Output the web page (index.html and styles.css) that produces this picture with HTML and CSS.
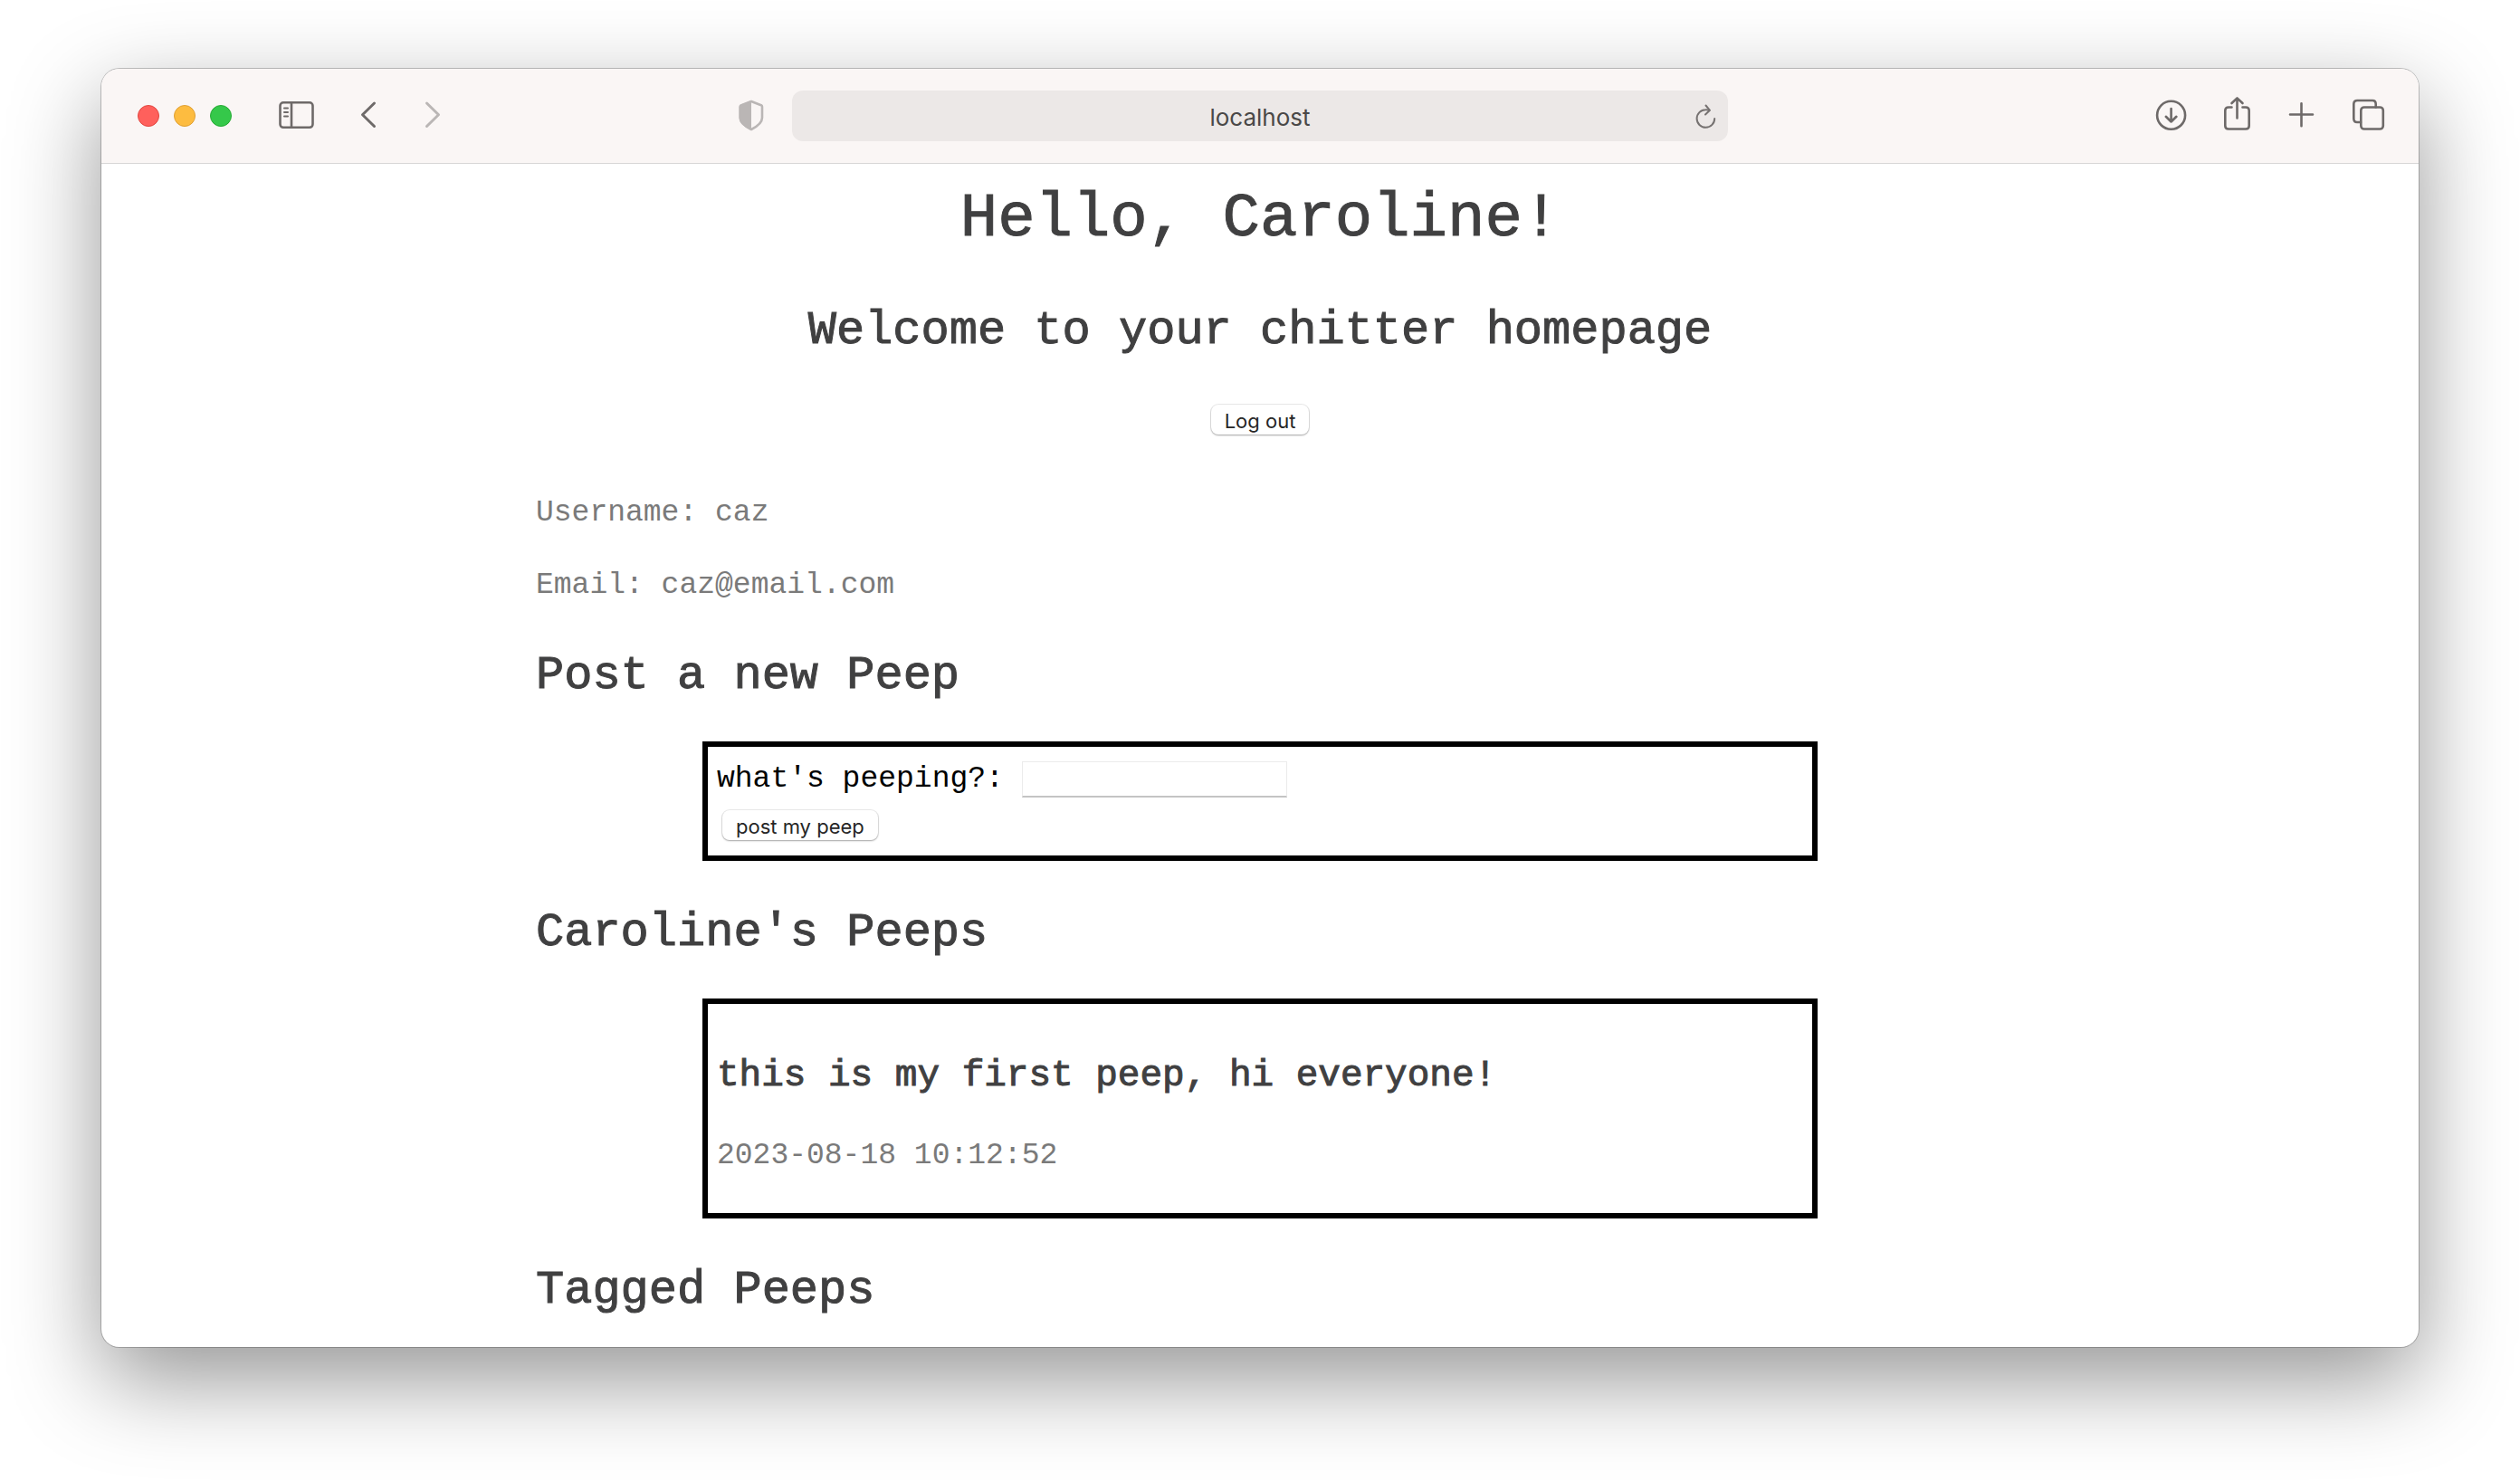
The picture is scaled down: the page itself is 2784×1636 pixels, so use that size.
FILE: index.html
```html
<!DOCTYPE html>
<html lang="en">
<head>
<meta charset="utf-8">
<meta name="viewport" content="width=device-width, initial-scale=1">
<title>Chitter</title>
<link rel="stylesheet" href="styles.css">
</head>
<body>
<div class="window">
  <header class="toolbar">
    <div class="toolbar-left">
      <div class="lights">
        <button class="light light-close" aria-label="Close"></button>
        <button class="light light-minimise" aria-label="Minimise"></button>
        <button class="light light-zoom" aria-label="Zoom"></button>
      </div>
      <button class="icon-button sidebar-button" aria-label="Show sidebar">
        <svg viewBox="0 0 40 40"><rect x="1.500" y="5.300" width="36" height="27.500" rx="3.500"/><path d="M14 5.300v27.500"/><path class="fine" d="M6 11.500h4M6 16h4M6 20.500h4"/></svg>
      </button>
      <button class="icon-button back-button" aria-label="Back">
        <svg viewBox="0 0 40 40"><path class="bold" d="M26.500 6L13.500 18.800L26.500 31.500"/></svg>
      </button>
      <button class="icon-button forward-button" aria-label="Forward" disabled>
        <svg viewBox="0 0 40 40"><path class="bold" d="M13.500 6L26.500 18.800L13.500 31.500"/></svg>
      </button>
      <button class="icon-button shield-button" aria-label="Privacy report">
        <svg viewBox="0 0 40 40"><path d="M20 4L31.500 8.500Q32 8.800 32 10V22C32 28 26 32 20 35C14 32 7.800 28 7.800 22V10Q7.800 8.800 8.500 8.500Z"/><path class="filled" d="M20 3L8 7.800Q6.500 8.500 6.500 10V22C6.500 29 14 33 20 36Z"/></svg>
      </button>
    </div>
    <div class="address">
      <input class="address-input" type="text" value="localhost" aria-label="Address">
      <button class="reload-button" aria-label="Reload">
        <svg viewBox="0 0 28 32"><path d="M17 9.700Q15 9 13.300 9.200A9.800 9.800 0 1 0 23.200 19"/><path d="M13.500 4.500L18 9.800L13 14.500"/></svg>
      </button>
    </div>
    <div class="toolbar-right">
      <button class="icon-button" aria-label="Downloads">
        <svg viewBox="0 0 40 40"><circle cx="21.600" cy="19.300" r="15.500"/><path d="M21.600 12v14.500M15.800 20.800L21.600 26.500L27.400 20.800"/></svg>
      </button>
      <button class="icon-button" aria-label="Share">
        <svg viewBox="0 0 40 40"><path d="M15.500 10.500H12Q8.300 10.500 8.300 14V31Q8.300 34.500 12 34.500H31Q34.700 34.500 34.700 31V14Q34.700 10.500 31 10.500H27.500"/><path d="M21.500 22.500V0.800M15.500 6L21.500 0.400L27.500 6"/></svg>
      </button>
      <button class="icon-button" aria-label="New tab">
        <svg viewBox="0 0 40 40"><path d="M19.500 6.300v25M7 18.500h25"/></svg>
      </button>
      <button class="icon-button" aria-label="Tab overview">
        <svg viewBox="0 0 40 40"><path d="M12 27H8Q4.300 27 4.300 23V7Q4.300 3 8.300 3H25Q28.700 3 28.700 7V10.500"/><rect x="12.300" y="10.500" width="24.500" height="24" rx="3.500"/></svg>
      </button>
    </div>
  </header>

  <main class="page">
    <div class="intro">
      <h1 class="greeting">Hello, Caroline!</h1>
      <h2 class="welcome">Welcome to your chitter homepage</h2>
      <button class="push-button logout">Log out</button>
    </div>
    <div class="content">
      <div class="details">
        <p class="detail">Username: caz</p>
        <p class="detail">Email: caz@email.com</p>
      </div>

      <h2 class="section-title">Post a new Peep</h2>
      <form class="card peep-form">
        <div class="field">
          <label for="peep">what's peeping?:</label>
          <input class="peep-input" id="peep" name="peep" type="text">
        </div>
        <button class="push-button post-button" type="button">post my peep</button>
      </form>

      <h2 class="section-title">Caroline's Peeps</h2>
      <article class="card peep">
        <h3 class="peep-text">this is my first peep, hi everyone!</h3>
        <p class="detail">2023-08-18 10:12:52</p>
      </article>

      <h2 class="section-title">Tagged Peeps</h2>
    </div>
  </main>
</div>
</body>
</html>
```

FILE: styles.css
```css
* {
  box-sizing: border-box;
}

body {
  margin: 0;
  min-height: 100vh;
  padding: 76px 112px 148px;
  display: flex;
  background: #fff;
  font-family: "Liberation Mono", monospace;
}

h1, h2, h3, p {
  margin: 0;
}

button, input {
  margin: 0;
  padding: 0;
  border: 0;
  background: none;
  font-family: Inter, sans-serif;
}

.window {
  flex: 1;
  min-width: 0;
  display: flex;
  flex-direction: column;
  overflow: hidden;
  border-radius: 20px;
  background: #fff;
  box-shadow: 0 0 0 1px rgba(0, 0, 0, 0.22), 0 36px 100px rgba(0, 0, 0, 0.42);
}

/* Browser toolbar */

.toolbar {
  display: grid;
  grid-template-columns: 1fr minmax(0, 1034px) 1fr;
  align-items: center;
  height: 105px;
  padding: 0 36px;
  border-bottom: 1px solid #d8d6d6;
  background: #faf6f5;
}

.toolbar-left,
.toolbar-right,
.lights {
  display: flex;
  align-items: center;
}

.toolbar-right {
  justify-content: flex-end;
  gap: 33px;
}

.lights {
  gap: 16px;
  margin: 0 52px 0 4px;
}

.light {
  width: 24px;
  height: 24px;
  border-radius: 50%;
}

.light-close {
  border: 1px solid #e2463f;
  background: #ff605c;
}

.light-minimise {
  border: 1px solid #e0a033;
  background: #fdbc40;
}

.light-zoom {
  border: 1px solid #27aa35;
  background: #35c84a;
}

.icon-button {
  flex: none;
  width: 40px;
  height: 40px;
  color: #6e6a69;
}

.icon-button svg,
.reload-button svg {
  display: block;
  width: 100%;
  height: 100%;
  overflow: visible;
  fill: none;
  stroke: currentColor;
  stroke-width: 2.6;
  stroke-linecap: round;
  stroke-linejoin: round;
}

.icon-button .bold {
  stroke-width: 3;
}

.icon-button .fine {
  stroke-width: 2;
}

.icon-button .filled {
  fill: currentColor;
  stroke: none;
}

.back-button {
  margin-left: 39px;
}

.forward-button {
  margin-left: 31px;
  color: #bab6b5;
}

.shield-button {
  margin: 0 25px 0 auto;
  color: #bab6b5;
}

.address {
  display: flex;
  align-items: center;
  height: 56px;
  padding: 0 10px 0 38px;
  border-radius: 12px;
  background: #ece8e7;
}

.address-input {
  flex: 1;
  min-width: 0;
  height: 56px;
  padding-top: 3px;
  color: #4a4848;
  font-size: 26px;
  text-align: center;
}

.reload-button {
  width: 28px;
  height: 32px;
  color: #767271;
}

.reload-button svg {
  stroke-width: 2;
}

/* Chitter page */

.page {
  flex: 1;
  padding-top: 13px;
}

.greeting,
.welcome,
.section-title,
.peep-text {
  color: #404041;
  font-weight: 400;
  -webkit-text-stroke: 1px currentColor;
}

.intro {
  display: flex;
  flex-direction: column;
  align-items: center;
  text-align: center;
}

.greeting {
  margin-bottom: 40px;
  font-size: 69px;
  line-height: 96px;
}

.welcome {
  margin-bottom: 45px;
  font-size: 52px;
  line-height: 72px;
}

.push-button {
  height: 33px;
  padding: 3px 15px 0;
  border-radius: 8px;
  background: #fff;
  box-shadow: 0 0 0 1px rgba(0, 0, 0, 0.08), 0 1px 2px rgba(0, 0, 0, 0.3);
  color: #262626;
  font-size: 22px;
  line-height: 30px;
}

.content {
  max-width: 1600px;
  margin: 67px auto 0;
}

.details {
  display: flex;
  flex-direction: column;
  gap: 40px;
}

.detail {
  color: #7a7a7a;
  font-size: 33px;
  line-height: 40px;
}

.section-title {
  margin: 44px 0 36px;
  font-size: 52px;
  line-height: 72px;
}

.section-title:last-child {
  margin-bottom: 0;
}

.card {
  margin: 0 184px;
  border: 6px solid #000;
}

.peep-form {
  display: flex;
  flex-direction: column;
  align-items: flex-start;
  gap: 14px;
  padding: 16px 10px 17px;
}

.field {
  display: flex;
  align-items: center;
  gap: 20px;
  color: #000;
  font-size: 33px;
  line-height: 40px;
}

.peep-input {
  width: 293px;
  height: 40px;
  padding: 0 6px;
  border: 1px solid #ebebeb;
  border-bottom: 2px solid #c4c4c4;
  background: #fff;
  font-size: 22px;
}

.post-button {
  margin-left: 6px;
}

.peep {
  display: flex;
  flex-direction: column;
  gap: 41px;
  padding: 51px 10px 43px;
}

.peep-text {
  font-size: 41px;
  line-height: 56px;
}
```
